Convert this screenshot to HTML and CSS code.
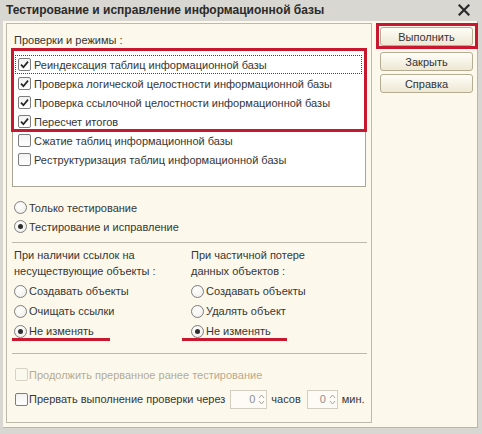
FILE: index.html
```html
<!DOCTYPE html>
<html lang="ru">
<head>
<meta charset="utf-8">
<title>Тестирование и исправление информационной базы</title>
<link rel="stylesheet" href="styles.css">
</head>
<body>
<div class="window">
  <div class="titlebar">
    <span class="title">Тестирование и исправление информационной базы</span>
    <svg class="close" width="12" height="12" viewBox="0 0 12 12"><path d="M1.5 1.5 L10.5 10.5 M10.5 1.5 L1.5 10.5" stroke="#2a2a2a" stroke-width="2.2" stroke-linecap="square"/></svg>
  </div>
  <div class="body">
    <div class="panel">
      <div class="label">Проверки и режимы :</div>
      <div class="listbox">
        <div class="mark-list"></div>
        <div class="row focus"><span class="cb on"><svg viewBox="0 0 13 13"><path d="M3 6.6 L5.4 9.2 L10 3.6" fill="none" stroke="#262626" stroke-width="1.7"/></svg></span><span>Реиндексация таблиц информационной базы</span></div>
        <div class="row"><span class="cb on"><svg viewBox="0 0 13 13"><path d="M3 6.6 L5.4 9.2 L10 3.6" fill="none" stroke="#262626" stroke-width="1.7"/></svg></span><span>Проверка логической целостности информационной базы</span></div>
        <div class="row"><span class="cb on"><svg viewBox="0 0 13 13"><path d="M3 6.6 L5.4 9.2 L10 3.6" fill="none" stroke="#262626" stroke-width="1.7"/></svg></span><span>Проверка ссылочной целостности информационной базы</span></div>
        <div class="row"><span class="cb on"><svg viewBox="0 0 13 13"><path d="M3 6.6 L5.4 9.2 L10 3.6" fill="none" stroke="#262626" stroke-width="1.7"/></svg></span><span>Пересчет итогов</span></div>
        <div class="row"><span class="cb"></span><span>Сжатие таблиц информационной базы</span></div>
        <div class="row"><span class="cb"></span><span>Реструктуризация таблиц информационной базы</span></div>
      </div>
      <div class="modes">
        <div class="radio-row"><span class="rb"></span><span>Только тестирование</span></div>
        <div class="radio-row"><span class="rb on"></span><span>Тестирование и исправление</span></div>
      </div>
      <div class="sep"></div>
      <div class="cols">
        <div class="col col-left">
          <div class="col-label">При наличии ссылок на<br>несуществующие объекты :</div>
          <div class="opt"><span class="rb"></span><span>Создавать объекты</span></div>
          <div class="opt"><span class="rb"></span><span>Очищать ссылки</span></div>
          <div class="opt"><span class="rb on"></span><span>Не изменять</span></div>
          <div class="underline underline-left"></div>
        </div>
        <div class="col col-right">
          <div class="col-label">При частичной потере<br>данных объектов :</div>
          <div class="opt"><span class="rb"></span><span>Создавать объекты</span></div>
          <div class="opt"><span class="rb"></span><span>Удалять объект</span></div>
          <div class="opt"><span class="rb on"></span><span>Не изменять</span></div>
          <div class="underline underline-right"></div>
        </div>
      </div>
      <div class="sep sep2"></div>
      <div class="bottom">
        <div class="brow disabled"><span class="cb dis"></span><span>Продолжить прерванное ранее тестирование</span></div>
        <div class="brow"><span class="cb"></span><span class="break-text">Прервать выполнение проверки через</span>
          <span class="spin spin1"><span class="spin-val">0</span><span class="spin-arrows"><svg width="7" height="15" viewBox="0 0 7 15"><path d="M1 6 L3.5 3 L6 6" fill="none" stroke="#a9a59a" stroke-width="1"/><path d="M1 9 L3.5 12 L6 9" fill="none" stroke="#a9a59a" stroke-width="1"/></svg></span></span>
          <span class="unit">часов</span>
          <span class="spin spin2"><span class="spin-val">0</span><span class="spin-arrows"><svg width="7" height="15" viewBox="0 0 7 15"><path d="M1 6 L3.5 3 L6 6" fill="none" stroke="#a9a59a" stroke-width="1"/><path d="M1 9 L3.5 12 L6 9" fill="none" stroke="#a9a59a" stroke-width="1"/></svg></span></span>
          <span class="unit">мин.</span>
        </div>
      </div>
    </div>
    <div class="buttons">
      <div class="btn btn-run">Выполнить<div class="mark-btn"></div></div>
      <div class="btn btn-close">Закрыть</div>
      <div class="btn btn-help">Справка</div>
    </div>
  </div>
</div>
</body>
</html>
```

FILE: styles.css
```css
* { box-sizing: border-box; }
html, body { margin: 0; padding: 0; }
body {
  width: 482px;
  height: 434px;
  overflow: hidden;
  background: #d6d4cf;
  font-family: "Liberation Sans", Arial, sans-serif;
  font-size: 11px;
  color: #363636;
}
.window {
  width: 482px;
  height: 434px;
  background: #d9d7d2;
  padding: 0 4px 6px 3px;
  display: flex;
  flex-direction: column;
}
.titlebar {
  height: 21px;
  flex: none;
  display: flex;
  align-items: center;
  justify-content: space-between;
  padding: 0 8px 1px 3px;
}
.title {
  font-weight: bold;
  font-size: 12px;
  color: #2b2b2b;
}
.close { display: block; }
.body {
  flex: 1;
  background: #fcf9ec;
  display: flex;
  align-items: flex-start;
  border-right: 1px solid #b9b6ad;
  border-bottom: 1px solid #b9b6ad;
}
.panel {
  margin: 2px 0 0 3px;
  width: 366px;
  height: 400px;
  border: 1px solid #bdb9ab;
  display: flex;
  flex-direction: column;
}
.label {
  padding: 9px 0 0 7px;
  line-height: 14px;
}
.listbox {
  position: relative;
  margin: 2px 0 0 5px;
  width: 354px;
  height: 138px;
  background: #fff;
  border: 1px solid #aaa696;
  padding-top: 5px;
}
.mark-list {
  position: absolute;
  left: -2px;
  top: -2px;
  width: 356px;
  height: 84px;
  border: 3px solid #c8182f;
}
.row {
  height: 19px;
  margin: 0 3px 0 2px;
  padding-left: 3px;
  display: flex;
  align-items: center;
  gap: 3px;
  white-space: nowrap;
}
.row.focus {
  outline: 1px dotted #444;
  outline-offset: -1px;
}
.cb {
  flex: none;
  width: 13px;
  height: 13px;
  border: 1px solid #7d7d7d;
  border-radius: 2px;
  background: linear-gradient(#f2f2f2, #ffffff);
  display: inline-block;
  position: relative;
}
.cb svg {
  position: absolute;
  left: -1px;
  top: -1px;
  width: 13px;
  height: 13px;
}
.cb.dis { border-color: #d6d2c4; background: #fbf8ee; }
.rb {
  flex: none;
  width: 13px;
  height: 13px;
  border: 1px solid #7e7e7e;
  border-radius: 50%;
  background: radial-gradient(circle at 40% 35%, #ffffff, #ecebe6);
  display: inline-block;
  position: relative;
}
.rb.on::after {
  content: "";
  position: absolute;
  left: 3px;
  top: 3px;
  width: 5px;
  height: 5px;
  border-radius: 50%;
  background: #2e2e2e;
}
.modes {
  margin-top: 11px;
  padding-left: 7px;
}
.radio-row, .opt {
  display: flex;
  align-items: center;
  gap: 2px;
  white-space: nowrap;
}
.radio-row { height: 19px; }
.sep {
  margin: 6px 4px 0 5px;
  height: 1px;
  background: #bdb9ab;
}
.cols {
  display: flex;
  margin-top: 4px;
}
.col { position: relative; }
.col-left { padding-left: 7px; width: 184px; }
.col-right { padding-left: 0; }
.col-label {
  line-height: 16px;
  margin-bottom: 2px;
}
.opt { height: 20px; }
.underline {
  position: absolute;
  top: 91px;
  height: 3px;
  background: #c8182f;
}
.underline-left { left: 5px; width: 98px; }
.underline-right { left: -9px; width: 105px; }
.sep2 { margin-top: 12px; }
.bottom {
  padding-left: 8px;
  margin-top: 11px;
}
.brow {
  display: flex;
  align-items: center;
  gap: 1px;
  white-space: nowrap;
}
.brow:first-child { height: 19px; }
.brow + .brow { height: 22px; margin-top: 4px; }
.disabled { color: #b6ab92; }
.break-text { margin-right: 4px; }
.spin {
  display: inline-flex;
  align-items: center;
  height: 19px;
  border: 1px solid #d3cebf;
  background: #fdfbf5;
  color: #8f8f8f;
}
.spin1 { width: 37px; }
.spin2 { width: 31px; margin-left: 5px; }
.spin-val { flex: 1; text-align: right; padding-right: 2px; }
.spin-arrows { width: 9px; display: flex; justify-content: center; }
.unit { margin-left: 3px; }
.buttons {
  margin-left: 8px;
  padding-top: 6px;
  display: flex;
  flex-direction: column;
}
.btn {
  position: relative;
  width: 93px;
  height: 19px;
  border: 1px solid #b4ad94;
  border-radius: 3px;
  background: linear-gradient(#fefdf8, #eee8d3);
  display: flex;
  align-items: center;
  justify-content: center;
  color: #333;
}
.btn-close { margin-top: 6px; }
.btn-help { margin-top: 3px; }
.mark-btn {
  position: absolute;
  left: -5px;
  top: -5px;
  right: -6px;
  bottom: -4px;
  border: 3px solid #c8182f;
}
```
